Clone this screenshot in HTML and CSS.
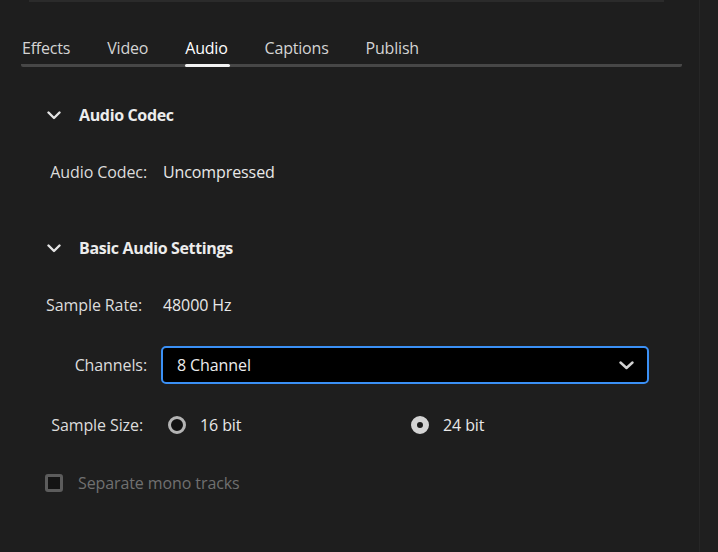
FILE: index.html
```html
<!DOCTYPE html>
<html lang="en">
<head>
<meta charset="utf-8">
<title>Audio Export Settings</title>
<link rel="stylesheet" href="styles.css">
</head>
<body>
<div class="window">
  <div class="main">
    <div class="top-rule"></div>
    <nav class="tabs">
      <span class="tab">Effects</span>
      <span class="tab">Video</span>
      <span class="tab active">Audio</span>
      <span class="tab">Captions</span>
      <span class="tab">Publish</span>
    </nav>

    <section class="section first">
      <div class="section-head">
        <svg class="chev" width="14" height="9" viewBox="0 0 14 9"><path d="M1.5 1.5 L7 7 L12.5 1.5" fill="none" stroke="#e4e4e4" stroke-width="2.4" stroke-linecap="round" stroke-linejoin="round"/></svg>
        <span class="head-text">Audio Codec</span>
      </div>
      <div class="row">
        <span class="label">Audio Codec:</span>
        <span class="value">Uncompressed</span>
      </div>
    </section>

    <section class="section">
      <div class="section-head">
        <svg class="chev" width="14" height="9" viewBox="0 0 14 9"><path d="M1.5 1.5 L7 7 L12.5 1.5" fill="none" stroke="#e4e4e4" stroke-width="2.4" stroke-linecap="round" stroke-linejoin="round"/></svg>
        <span class="head-text">Basic Audio Settings</span>
      </div>
      <div class="rows">
        <div class="row">
          <span class="label label-rate">Sample Rate:</span>
          <span class="value">48000 Hz</span>
        </div>
        <div class="row row-select">
          <span class="label">Channels:</span>
          <div class="select">
            <span class="select-text">8 Channel</span>
            <svg class="select-chev" width="15" height="9" viewBox="0 0 15 9"><path d="M1.5 1.5 L7.5 7 L13.5 1.5" fill="none" stroke="#d2d2d2" stroke-width="2.4" stroke-linecap="round" stroke-linejoin="round"/></svg>
          </div>
        </div>
        <div class="row">
          <span class="label label-size">Sample Size:</span>
          <div class="radios">
            <label class="radio-opt"><span class="radio"></span><span class="value">16 bit</span></label>
            <label class="radio-opt"><span class="radio checked"></span><span class="value">24 bit</span></label>
          </div>
        </div>
        <div class="row check-row">
          <span class="checkbox"></span>
          <span class="disabled-text">Separate mono tracks</span>
        </div>
      </div>
    </section>
  </div>
  <div class="edge"></div>
</div>
</body>
</html>
```

FILE: styles.css
```css
html, body {
  margin: 0;
  padding: 0;
  background: #1e1e1e;
}

body {
  width: 718px;
  height: 552px;
  overflow: hidden;
  font-family: "Open Sans", "Noto Sans", sans-serif;
  font-size: 16px;
  letter-spacing: -0.1px;
  color: #e6e6e6;
}

.window {
  display: flex;
  height: 552px;
}

.main {
  width: 699px;
  display: flex;
  flex-direction: column;
}

.edge {
  flex: 1;
  border-left: 1px solid #262626;
  background: #1f1f1f;
}

.top-rule {
  margin-left: 29px;
  width: 635px;
  height: 2px;
  background: #2b2b2b;
}

.tabs {
  margin-left: 21px;
  margin-top: 30px;
  width: 661px;
  display: flex;
  gap: 37px;
  padding-left: 1px;
  box-sizing: border-box;
  border-bottom: 3px solid #474747;
  border-radius: 2px;
  height: 35px;
  letter-spacing: -0.2px;
}

.tab {
  color: #d4d4d4;
  line-height: 32px;
  height: 32px;
  position: relative;
}

.tab.active {
  color: #ffffff;
}

.tab.active::after {
  content: "";
  position: absolute;
  left: 0;
  right: -2px;
  bottom: -3px;
  height: 3px;
  border-radius: 2px;
  background: #f2f2f2;
}

.section {
  margin-top: 36px;
  display: flex;
  flex-direction: column;
}

.section.first {
  margin-top: 28px;
}

.section-head {
  height: 40px;
  display: flex;
  align-items: center;
  padding-left: 47px;
  margin-bottom: 17px;
}

.chev {
  display: block;
}

.head-text {
  margin-left: 18px;
  font-weight: 700;
  letter-spacing: -0.35px;
  color: #ececec;
}

.rows {
  display: flex;
  flex-direction: column;
  gap: 20px;
}

.row {
  height: 40px;
  display: flex;
  align-items: center;
}

.label {
  width: 147px;
  text-align: right;
  box-sizing: border-box;
  color: #dcdcdc;
  margin-right: 16px;
  flex: none;
}

.label-rate {
  padding-right: 5px;
}

.label-size {
  padding-right: 4px;
  margin-right: 21px;
}

.row-select .label {
  margin-right: 14px;
}

.value {
  color: #e8e8e8;
}

.select {
  width: 488px;
  height: 38px;
  box-sizing: border-box;
  border: 2px solid #3b90f5;
  border-radius: 5px;
  background: #000000;
  display: flex;
  align-items: center;
  justify-content: space-between;
  padding: 0 13px 0 14px;
}

.select-text {
  color: #ececec;
}

.radios {
  display: flex;
}

.radio-opt {
  width: 243px;
  display: flex;
  align-items: center;
  gap: 14px;
}

.radio {
  width: 18px;
  height: 18px;
  box-sizing: border-box;
  border-radius: 50%;
  border: 3px solid #b4b4b4;
  background: #121212;
}

.radio.checked {
  border: 6px solid #d4d4d4;
  background: #1a1a1a;
}

.check-row {
  padding-left: 45px;
  margin-top: -2px;
}

.checkbox {
  width: 18px;
  height: 18px;
  box-sizing: border-box;
  border: 3px solid #5c5c5c;
  border-radius: 3px;
  background: #141414;
  margin-right: 15px;
}

.disabled-text {
  color: #707070;
}
```
